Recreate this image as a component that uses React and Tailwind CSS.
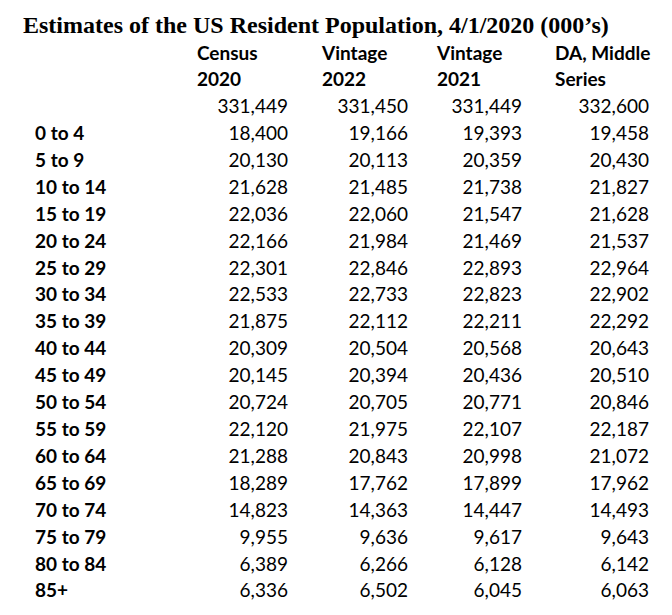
import React from "react";

const columns = [
  { head: ["Census", "2020"], cell: "w-[125px] pr-[34px]" },
  { head: ["Vintage", "2022"], cell: "w-[115px] pr-[29px]" },
  { head: ["Vintage", "2021"], cell: "w-[118px] pr-[33px]" },
  { head: ["DA, Middle", "Series"], cell: "w-[117px] pr-[23px]" },
];

const totals = ["331,449", "331,450", "331,449", "332,600"];

const rows = [
  ["0 to 4", "18,400", "19,166", "19,393", "19,458"],
  ["5 to 9", "20,130", "20,113", "20,359", "20,430"],
  ["10 to 14", "21,628", "21,485", "21,738", "21,827"],
  ["15 to 19", "22,036", "22,060", "21,547", "21,628"],
  ["20 to 24", "22,166", "21,984", "21,469", "21,537"],
  ["25 to 29", "22,301", "22,846", "22,893", "22,964"],
  ["30 to 34", "22,533", "22,733", "22,823", "22,902"],
  ["35 to 39", "21,875", "22,112", "22,211", "22,292"],
  ["40 to 44", "20,309", "20,504", "20,568", "20,643"],
  ["45 to 49", "20,145", "20,394", "20,436", "20,510"],
  ["50 to 54", "20,724", "20,705", "20,771", "20,846"],
  ["55 to 59", "22,120", "21,975", "22,107", "22,187"],
  ["60 to 64", "21,288", "20,843", "20,998", "21,072"],
  ["65 to 69", "18,289", "17,762", "17,899", "17,962"],
  ["70 to 74", "14,823", "14,363", "14,447", "14,493"],
  ["75 to 79", "9,955", "9,636", "9,617", "9,643"],
  ["80 to 84", "6,389", "6,266", "6,128", "6,142"],
  ["85+", "6,336", "6,502", "6,045", "6,063"],
];

const App = () => {
  return (
    <div className="w-[672px] h-[615px] bg-white text-black overflow-hidden">
      <h1 className="pl-[23px] pt-[13px] mb-[3px] text-[24px] leading-[24px] font-bold font-['Liberation_Serif',serif] whitespace-nowrap">
        Estimates of the US Resident Population, 4/1/2020 (000’s)
      </h1>
      <div className="font-['Lato',sans-serif] text-[19px]">
        {/* column headings */}
        <div className="flex leading-[25px] font-bold">
          <div className="w-[197px]" />
          {columns.map((c, i) => (
            <div key={i} className={c.cell + " whitespace-nowrap"}>
              {c.head[0]}
            </div>
          ))}
        </div>
        <div className="flex leading-[27px] font-bold">
          <div className="w-[197px]" />
          {columns.map((c, i) => (
            <div key={i} className={c.cell + " whitespace-nowrap"}>
              {c.head[1]}
            </div>
          ))}
        </div>
        <div className="flex leading-[28px]">
          <div className="w-[197px]" />
          {columns.map((c, i) => (
            <div key={i} className={c.cell + " text-right"}>
              {totals[i]}
            </div>
          ))}
        </div>
        {rows.map((r) => (
          <div key={r[0]} className="flex leading-[26.9px]">
            <div className="w-[197px] pl-[35px] font-bold">{r[0]}</div>
            {columns.map((c, i) => (
              <div key={i} className={c.cell + " text-right"}>
                {r[i + 1]}
              </div>
            ))}
          </div>
        ))}
      </div>
    </div>
  );
};

export default App;
